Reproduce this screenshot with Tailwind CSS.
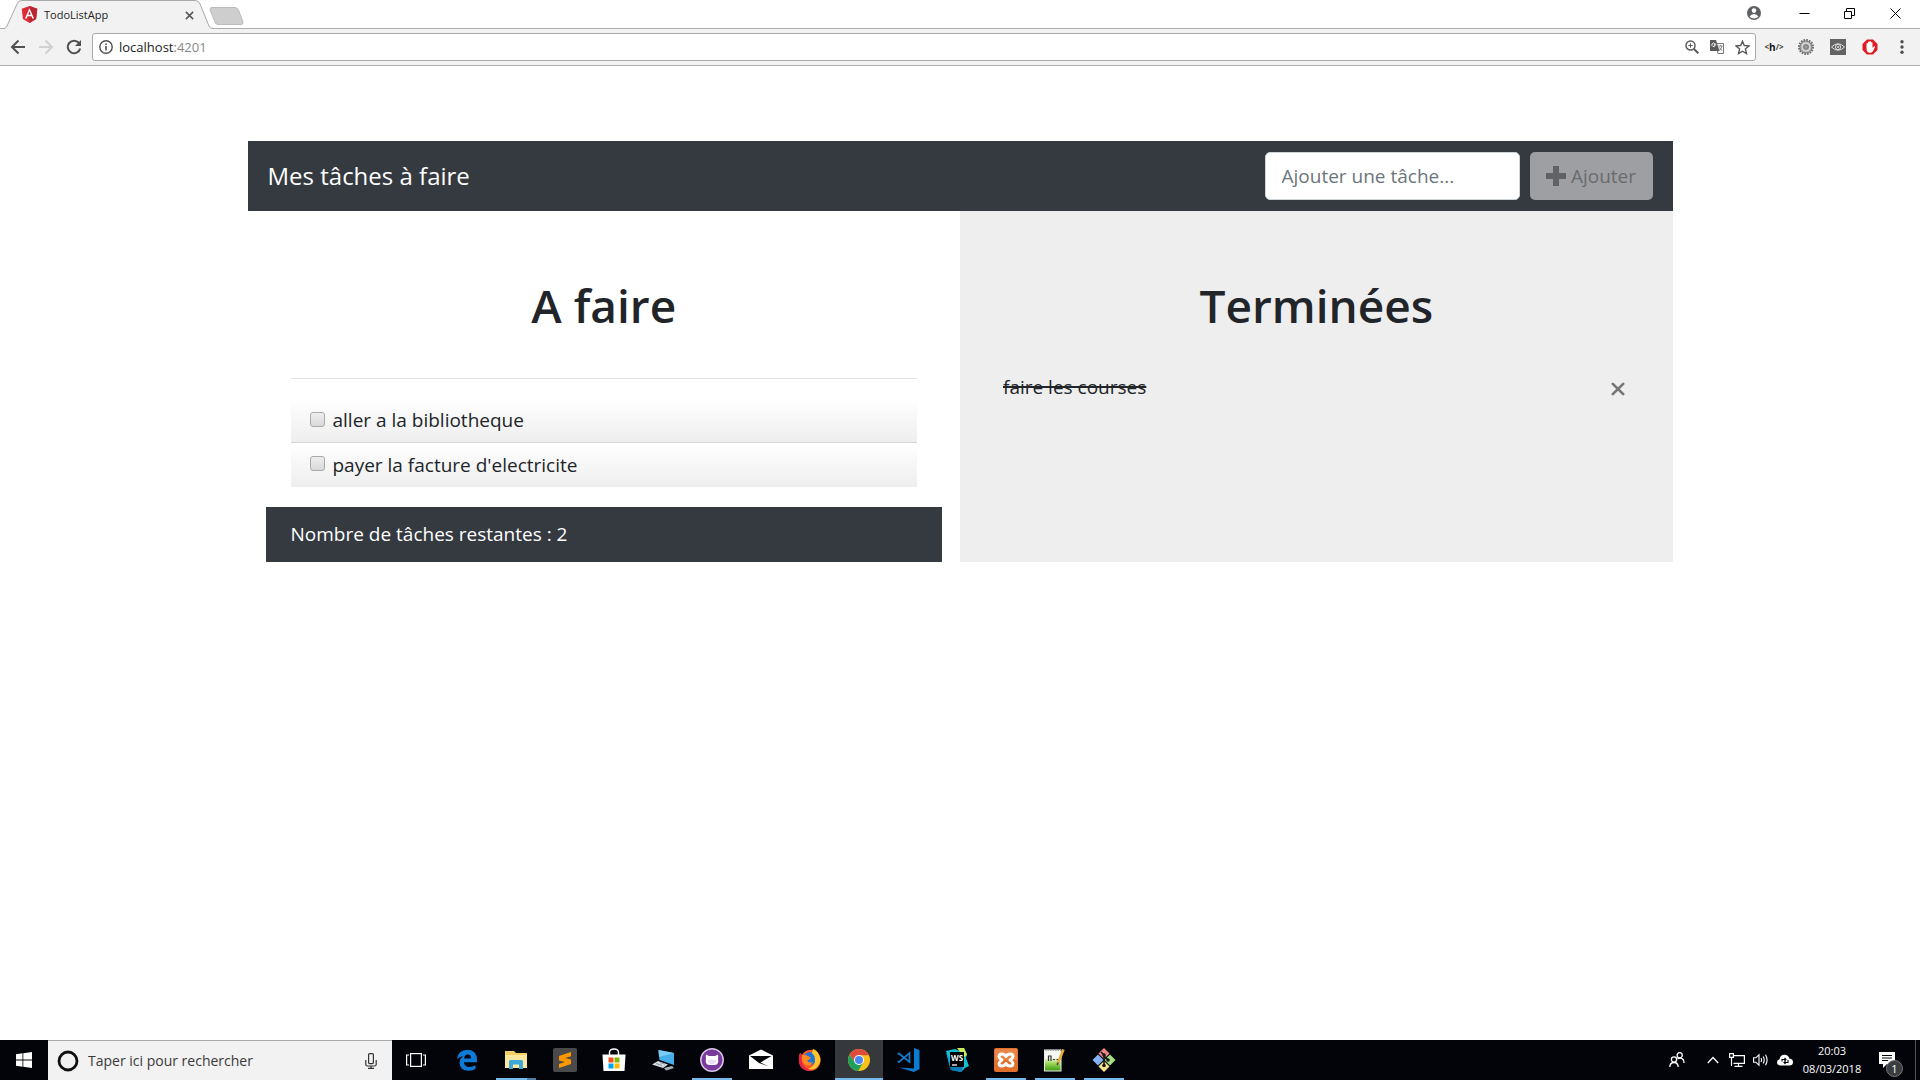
<!DOCTYPE html>
<html lang="fr">
<head>
<meta charset="utf-8">
<title>TodoListApp</title>
<script src="https://cdn.jsdelivr.net/npm/@tailwindcss/browser@4"></script>
</head>
<body class="flex min-h-screen flex-col bg-white font-['Open_Sans','Noto_Sans',sans-serif] text-[#212529]">

<!-- Browser chrome -->
<header>
  <div class="flex h-7 items-stretch bg-white pl-1">
    <div class="relative flex w-[209px] items-center">
      <svg class="absolute inset-0 z-10 h-[29px] w-[209px]" viewBox="0 0 209 29" fill="none"><path d="M0 29Q2 28 3 26L13 4Q14 .5 18 .5H191Q195 .5 196 4L205 26Q206 28.500 209 28.500V29Z" fill="#f2f2f2"/><path d="M0 28.500Q2 28 3 26L13 4Q14 .5 18 .5H191Q195 .5 196 4L205 26Q206 28.500 209 28.500" stroke="#a9a9a9"/></svg>
      <div class="relative z-20 flex w-full items-center pl-[17px]">
        <svg class="size-[17px]" viewBox="0 0 16 16"><path d="M8 0 15.300 2.600 14.200 12.300 8 16 1.800 12.300.7 2.600Z" fill="#dd2c35"/><path d="M8 0 15.300 2.600 14.200 12.300 8 16Z" fill="#b92530"/><path d="M8 2 3.700 11.800H5.300L6.200 9.600H9.800L10.700 11.800H12.300ZM8 5 9.200 8.300H6.800Z" fill="#fff" fill-rule="evenodd"/></svg>
        <span class="ml-1.5 mt-0.5 text-[11px] leading-4 text-[#222]">TodoListApp</span>
        <button class="ml-auto mr-[18px] mt-0.5 flex size-3 items-center justify-center" aria-label="Fermer l'onglet"><svg class="size-[9px]" viewBox="0 0 10 10" stroke="#555" stroke-width="1.700"><path d="M1 1 9 9M9 1 1 9"/></svg></button>
      </div>
    </div>
    <button class="-ml-1 flex items-center pt-1" aria-label="Nouvel onglet"><svg class="h-[18px] w-[35px]" viewBox="0 0 35 18"><path d="M3 .5H26Q28.500.5 29.500 3L34 15Q34.500 17.500 32 17.500H9Q7 17.500 6 15L1 3Q.5.5 3 .5Z" fill="#cecece" stroke="#bcbcbc"/></svg></button>
    <div class="ml-auto flex h-[26px] items-center text-black">
      <svg class="mr-5 size-[14px]" viewBox="0 0 14 14"><circle cx="7" cy="7" r="7" fill="#5f6063"/><circle cx="7" cy="4.600" r="2.300" fill="#fff"/><path d="M2.500 10.500Q4 8 7 8T11.500 10.500Q9.800 12.500 7 12.500T2.500 10.500Z" fill="#fff"/></svg>
      <button class="flex w-[46px] justify-center" aria-label="Réduire"><svg class="size-[11px]" viewBox="0 0 11 11" stroke="currentColor"><path d="M.5 5.500H10.500"/></svg></button>
      <button class="flex w-[45px] justify-center" aria-label="Restaurer"><svg class="size-[11px]" viewBox="0 0 11 11" stroke="currentColor" fill="none"><path d="M.5 3.500H7.500V10.500H.5ZM2.500 3.500V.5H10.500V7.500H7.500"/></svg></button>
      <button class="mr-0.5 flex w-[46px] justify-center" aria-label="Fermer"><svg class="size-[11px]" viewBox="0 0 11 11" stroke="currentColor"><path d="M.5.5 10.500 10.500M10.500.5.5 10.500"/></svg></button>
    </div>
  </div>
  <div class="flex h-[38px] items-center border-y border-[#adadad] bg-[#f2f2f2] pl-[10px] pr-2.5">
    <button aria-label="Précédent"><svg class="size-4" viewBox="0 0 16 16" fill="none" stroke="#505050" stroke-width="2"><path d="M15 8H2M8.500 1.500 2 8l6.500 6.500"/></svg></button>
    <button class="ml-3" aria-label="Suivant"><svg class="size-4" viewBox="0 0 16 16" fill="none" stroke="#d0d0d0" stroke-width="2"><path d="M1 8H14M7.500 1.500 14 8l-6.500 6.500"/></svg></button>
    <button class="ml-3" aria-label="Actualiser"><svg class="size-4" viewBox="0 0 16 16" fill="none"><path d="M13 4A6.300 6.300 0 1 0 14.200 9.500" stroke="#505050" stroke-width="2"/><path d="M15 1V7H9Z" fill="#505050"/></svg></button>
    <div class="ml-2.5 flex h-7 flex-1 items-center rounded-[3px] border border-[#a9a9a9] bg-white pl-1.5 pr-[5px]">
      <svg class="size-[14px]" viewBox="0 0 14 14" fill="none"><circle cx="7" cy="7" r="6.200" stroke="#505050" stroke-width="1.400"/><path d="M7 6V10.500M7 3.500V5" stroke="#505050" stroke-width="1.600"/></svg>
      <div class="ml-[6px] flex-1 text-[13px] leading-5 text-[#222]">localhost<span class="text-[#888]">:4201</span></div>
      <div class="flex items-center gap-[11px]">
        <svg class="size-[14px]" viewBox="0 0 14 14" fill="none" stroke="#5a5a5a"><circle cx="5.500" cy="5.500" r="4.500" stroke-width="1.500"/><path d="M9 9l4.300 4.300" stroke-width="2"/><path d="M3.300 5.500H7.700M5.500 3.300V7.700"/></svg>
        <svg class="size-[14px]" viewBox="0 0 14 14"><path d="M5.500 3.500H13.500V13.500H8Z" fill="#fff" stroke="#777"/><path d="M0 0H6L9.500 11H0Z" fill="#5a5a5a"/><path d="M6.300 4.200H4.300V5.300H5.200A1.700 1.700 0 1 1 4.800 3.700" fill="none" stroke="#fff" stroke-width=".9"/><path d="M8.500 6H12.500M10.500 5V6M12 6Q11.500 9 9 10.500M9.500 7.500Q10.500 9.500 12.300 10.500" fill="none" stroke="#777" stroke-width=".9"/></svg>
        <svg class="size-[15px]" viewBox="0 0 15 15" fill="none" stroke="#5a5a5a" stroke-width="1.400"><path d="M7.500 1.200 9.300 5.500 14 5.900 10.400 9 11.500 13.600 7.500 11.200 3.500 13.600 4.600 9 1 5.900 5.700 5.500Z"/></svg>
      </div>
    </div>
    <div class="ml-2.5 flex items-center gap-4">
      <span class="flex w-4 items-center justify-center text-[10px] font-bold leading-4 text-[#111]"><span class="text-[8px] text-[#444]">&lt;</span>h<span class="text-[8px] text-[#444]">/&gt;</span></span>
      <svg class="size-4" viewBox="0 0 16 16"><circle cx="8" cy="8" r="7" fill="none" stroke="#666" stroke-width="2" stroke-dasharray="1.600 1.150"/><circle cx="8" cy="8" r="6" fill="#b5b5b5" stroke="#777"/><circle cx="8" cy="8" r="4" fill="none" stroke="#ddd"/><circle cx="8" cy="8" r="2.300" fill="#999" stroke="#777"/></svg>
      <svg class="size-4" viewBox="0 0 16 16" fill="none"><path d="M0 0H16V16H0Z" fill="#636363"/><path d="M1.500 8Q8 1.500 14.500 8Q8 14.500 1.500 8Z" stroke="#ddd"/><circle cx="8" cy="8" r="2.600" stroke="#ddd"/><circle cx="8" cy="8" r="1" fill="#ddd"/></svg>
      <svg class="size-4" viewBox="0 0 16 16"><path d="M5 .5H11L15.500 5V11L11 15.500H5L.5 11V5Z" fill="#e01b22"/><path d="M4.500 9V4.500Q5.200 3.500 6 4.500V3Q6.700 2 7.500 3V2.500Q8.300 1.700 9 2.500V3.500Q10 2.700 10.500 3.700V9L12 7.200Q13 7 13 8L10.800 12.500Q9.500 14 7.500 13.700Q4.500 13.500 4.500 9Z" fill="#fff"/></svg>
      <button aria-label="Menu"><svg class="size-4" viewBox="0 0 16 16" fill="#505050"><circle cx="8" cy="2.700" r="1.700"/><circle cx="8" cy="8" r="1.700"/><circle cx="8" cy="13.300" r="1.700"/></svg></button>
    </div>
  </div>
</header>

<!-- Application -->
<main class="flex-1">
  <div class="mx-auto mt-[75px] max-w-[1425px]">
    <nav class="flex h-[70px] items-center bg-[#343a40] px-5">
      <a href="#" class="text-[24px] leading-9 text-white">Mes tâches à faire</a>
      <form class="ml-auto flex gap-2.5">
        <input type="text" aria-label="Ajouter une tâche" placeholder="Ajouter une tâche..." class="h-12 w-[255px] rounded-[5px] border border-[#ced4da] bg-white px-4 text-[19px] placeholder:text-[#6c757d]">
        <button type="button" disabled class="flex h-12 w-[123px] items-center justify-center gap-[5px] rounded-[5px] bg-[#9e9fa2] text-[19px] text-[#696b6e]">
          <svg class="size-5" viewBox="0 0 20 20" fill="#606265"><path d="M7 0H13V7H20V13H13V20H7V13H0V7H7Z"/></svg>Ajouter
        </button>
      </form>
    </nav>
    <div class="grid grid-cols-2">
      <section class="px-[18px]">
        <div class="px-[25px] pt-16">
          <h1 class="text-center text-[46px] font-semibold leading-[60px]">A faire</h1>
          <hr class="mt-[43px] border-[#e3e3e3]">
          <ul class="mt-5 text-[19px]">
            <li class="flex h-11 items-center border-b border-[#d5d5d5] bg-linear-to-b from-white to-[#eee] pl-[19px]">
              <input id="t1" type="checkbox" class="mb-0.5 size-[15px] appearance-none rounded-[3px] border border-[#a9a9a9] bg-linear-to-b from-[#eee] to-[#d9d9d9]">
              <label for="t1" class="ml-2">aller a la bibliotheque</label>
            </li>
            <li class="flex h-11 items-center bg-linear-to-b from-white to-[#eee] pl-[19px]">
              <input id="t2" type="checkbox" class="mb-1 size-[15px] appearance-none rounded-[3px] border border-[#a9a9a9] bg-linear-to-b from-[#eee] to-[#d9d9d9]">
              <label for="t2" class="ml-2">payer la facture d'electricite</label>
            </li>
          </ul>
        </div>
        <footer class="mt-5 flex h-[55px] items-center bg-[#343a40] px-[25px] text-[19px] text-white">Nombre de tâches restantes : 2</footer>
      </section>
      <section class="bg-[#eee] px-[43px] pt-16">
        <h1 class="text-center text-[46px] font-semibold leading-[60px]">Terminées</h1>
        <ul class="mt-9 text-[19px]">
          <li class="flex h-8 items-center justify-between pr-[5px]">
            <span class="line-through decoration-2">faire les courses</span>
            <button class="mt-1 p-0" aria-label="Supprimer"><svg class="size-[14px]" viewBox="0 0 14 14" stroke="#757575" stroke-width="2.600" stroke-linecap="round"><path d="M1.800 1.800 12.200 12.200M12.200 1.800 1.800 12.200"/></svg></button>
          </li>
        </ul>
      </section>
    </div>
  </div>
</main>

<!-- Windows taskbar -->
<footer class="flex h-10 items-stretch bg-[#020409] text-white">
  <button class="flex w-12 items-center justify-center" aria-label="Démarrer"><svg class="size-4" viewBox="0 0 16 16" fill="#fff"><path d="M0 2.200 6.500 1.300V7.600H0ZM7.300 1.200 16 0V7.600H7.300ZM0 8.400H6.500V14.700L0 13.800ZM7.300 8.400H16V16L7.300 14.800Z"/></svg></button>
  <div class="flex w-[344px] items-center border-t border-[#aaa] bg-[#f2f2f2] pl-[9px] pr-[15px]">
    <svg class="size-[22px]" viewBox="0 0 22 22"><circle cx="11" cy="11" r="9" fill="none" stroke="#111" stroke-width="2.800"/></svg>
    <input type="text" aria-label="Rechercher" placeholder="Taper ici pour rechercher" class="ml-[9px] min-w-0 flex-1 text-[14px] placeholder:text-[#3a3a3a]">
    <svg class="h-4 w-3" viewBox="0 0 12 16" fill="none" stroke="#333" stroke-width="1.200"><rect x="3.600" y=".6" width="4.800" height="10" rx="1"/><path d="M.8 7V11.500Q.8 13 2.500 13H9.500Q11.200 13 11.200 11.500V7M6 13V15.400M3 15.400H9"/></svg>
  </div>
  <button class="flex w-12 items-center justify-center" aria-label="Affichage des tâches"><svg class="h-4 w-5" viewBox="0 0 20 16" fill="none" stroke="#fff" stroke-width="1.200"><rect x="4.600" y="1.600" width="10.800" height="12.800"/><path d="M3 3H.6V13H3M17 3H19.400V13H17"/></svg></button>

  <div class="ml-[3px] flex gap-px">
    <button class="flex w-12 items-center justify-center" aria-label="Edge"><svg class="size-[22px]" viewBox="0 0 22 22"><path d="M1 10Q2 1 11.500.8Q21 1 21 11V13.200H8Q8.300 18 13.500 18Q17 18 19.500 16.300V20Q17 21.800 12.500 21.800Q4 21.500 3.500 14Q3.700 9.500 7.500 7.200Q3.500 7.500 1 10ZM8.200 9.500H15Q15 5.500 11.700 5.500Q8.500 5.500 8.200 9.500Z" fill="#0f7ad6" fill-rule="evenodd"/></svg></button>
    <button class="relative flex w-12 items-center justify-center" aria-label="Explorateur"><svg class="size-[22px]" viewBox="0 0 22 22"><path d="M0 2H9L11 4H22V19H0Z" fill="#f5cf63"/><path d="M0 6H22V19H0Z" fill="#fce79e"/><path d="M4 20V12.500Q4 11 5.500 11H16.500Q18 11 18 12.500V20H14V15.500H8V20Z" fill="#3da9da"/></svg><span class="absolute bottom-0 left-1 h-0.5 w-[31px] bg-[#76b9ed]"></span><span class="absolute bottom-0 right-1 h-0.5 w-[9px] bg-[#4f7da3]"></span></button>
    <button class="flex w-12 items-center justify-center" aria-label="Sublime Text"><svg class="size-6" viewBox="0 0 24 24"><rect width="24" height="24" rx="2" fill="#4a4a4a"/><path d="M18 4 6 8V12.500L12 14 6 16V20L18 16V11.500L12 10 18 8.200Z" fill="#ff9800"/></svg></button>
    <button class="flex w-12 items-center justify-center" aria-label="Microsoft Store"><svg class="size-6" viewBox="0 0 24 24"><path d="M7.500 7V4Q8 1 12 1T16.500 4V7" fill="none" stroke="#fff" stroke-width="1.400"/><path d="M.5 6.500H23.500L22.500 23H1.500Z" fill="#fff"/><path d="M6.500 9.500H11.500V14.500H6.500Z" fill="#f25022"/><path d="M12.500 9.500H17.500V14.500H12.500Z" fill="#7fba00"/><path d="M6.500 15.500H11.500V20.500H6.500Z" fill="#00a4ef"/><path d="M12.500 15.500H17.500V20.500H12.500Z" fill="#ffb900"/></svg></button>
    <button class="flex w-12 items-center justify-center" aria-label="Bureau à distance"><svg class="size-6" viewBox="0 0 24 24"><path d="M7.500 2 23 5V17L8.500 12Z" fill="#45aee8"/><path d="M7.500 2 23 5 8 9Z" fill="#79cdf5"/><path d="M7 13 17 16.500 12 20 1 16.500Z" fill="#d7dde2"/><path d="M5 15.500 11 17.500M9 14.500 14 16.200" stroke="#8d979e"/><path d="M13 20 21 18 23 20 15 22.500Z" fill="#aab3ba"/></svg></button>
    <button class="relative flex w-12 items-center justify-center" aria-label="GitHub Desktop"><svg class="size-6" viewBox="0 0 24 24"><circle cx="12" cy="12" r="11.200" fill="#7a3a9c" stroke="#d9c2e5" stroke-width="1.500"/><path d="M6 6.500 9 8H15L18 6.500Q18.500 8.500 18 10.500Q19.500 17 14.500 17H9.500Q4.500 17 6 10.500Q5.500 8.500 6 6.500Z" fill="#fff"/><path d="M8 12Q12 11 16 12Q17 15.500 12 16T8 12Z" fill="#ecdff3"/></svg><span class="absolute inset-x-1 bottom-0 h-0.5 bg-[#76b9ed]"></span></button>
    <button class="flex w-12 items-center justify-center" aria-label="Courrier"><svg class="size-6" viewBox="0 0 24 24"><path d="M0 7.500 12 1.500 24 7.500V21H0Z" fill="#fff"/><path d="M1 8H22.500L11.500 14.500 20 18.500 10 15Z" fill="#020409"/></svg></button>
    <button class="flex w-12 items-center justify-center" aria-label="Firefox"><svg class="size-6" viewBox="0 0 24 24"><path d="M2 5 4 7Q7 2 12 2 18 .5 20.500 5.500 24 10 22 16 19 23 12 23 4 23 1.500 16 0 10 2 5Z" fill="#ff5a26"/><path d="M2 5 4 8Q2.500 15 7 19Q10 22 15 21L12 23Q4 23 1.500 16 0 10 2 5Z" fill="#e8234b"/><circle cx="12" cy="10.500" r="6.500" fill="#2273d3"/><path d="M15 1Q19 2 21 7 24 13 20 18 16 23 10 21 18 18 17 11 16.500 7 14 5Z" fill="#ffc42b"/><path d="M4 7Q8 6.500 10 8L13 10Q11 12 9 12.500 11 15.500 15 14 12 19 7.500 17 3 14 4 7Z" fill="#ff8a1d"/></svg></button>
    <button class="relative flex w-12 items-center justify-center bg-[#36393c]" aria-label="Chrome"><svg class="size-[22px]" viewBox="0 0 22 22"><circle cx="11" cy="11" r="11" fill="#fbc116"/><path d="M1.500 5.500A11 11 0 0 1 20.500 5.600L20.900 6.300H11L6.800 13.400Z" fill="#dd4b3e"/><path d="M1.500 5.500A11 11 0 0 0 10.200 22L15.200 13.400 11 16 6.800 13.400Z" fill="#1fa15d"/><circle cx="11" cy="11" r="5" fill="#fff"/><circle cx="11" cy="11" r="4" fill="#4b88f1"/></svg><span class="absolute inset-x-0 bottom-0 h-0.5 bg-[#76b9ed]"></span></button>
    <button class="flex w-12 items-center justify-center" aria-label="Visual Studio Code"><svg class="size-6" viewBox="0 0 24 24"><path d="M18 0 23.500 2V21L18 24 3 19.500 18 20.500Z" fill="#0b7bd0"/><path d="M1.500 6 3 5.500 13.500 14V5L3 14 1.500 13.500" fill="none" stroke="#1a78c8" stroke-width="1.700"/></svg></button>
    <button class="flex w-12 items-center justify-center" aria-label="WebStorm"><svg class="size-6" viewBox="0 0 24 24"><path d="M1 3 10 1 15 3 19 0 22 6 21 10 24 18 20 20 16 24 6 22Z" fill="#12bfd3"/><path d="M12 0 19 0 22 7 19 9Z" fill="#cfe95a"/><path d="M1 4 6 14 5 20Z" fill="#0b9fd0"/><path d="M5 19H18L16 24 6 22Z" fill="#0c79b8"/><path d="M5 4H19V19H5Z" fill="#000"/><path d="M7 17H12" stroke="#fff" stroke-width="1.300"/><text x="12" y="12.500" fill="#fff" font-family="Open Sans, sans-serif" font-size="8" font-weight="700" text-anchor="middle">WS</text></svg></button>
    <button class="relative flex w-12 items-center justify-center" aria-label="XAMPP"><svg class="size-6" viewBox="0 0 24 24" fill="none"><rect width="24" height="24" rx="2" fill="#e0702c"/><path d="M1 1H23V12H1Z" fill="#e98546"/><path d="M12 8.500Q10.500 6 8 6 5 6 5 8.500 5 10 8 12 5 14 5 15.500 5 18 8 18 10.500 18 12 15.500 13.500 18 16 18 19 18 19 15.500 19 14 16 12 19 10 19 8.500 19 6 16 6 13.500 6 12 8.500Z" stroke="#fff" stroke-width="3" stroke-linejoin="round"/></svg><span class="absolute inset-x-1 bottom-0 h-0.5 bg-[#76b9ed]"></span></button>
    <button class="relative flex w-12 items-center justify-center" aria-label="Notepad++"><svg class="size-6" viewBox="0 0 24 24" fill="none"><defs><linearGradient id="np" x2="0" y2="1"><stop offset=".35" stop-color="#f6f8f2"/><stop offset=".6" stop-color="#a7dc64"/><stop offset="1" stop-color="#3f9d12"/></linearGradient></defs><path d="M1 1.500H18.500V23.500H1Z" fill="#ececec"/><path d="M2 3H17.500V22.500H2Z" fill="url(#np)"/><path d="M2 2H18" stroke="#8f8f8f" stroke-width="1.500" stroke-dasharray="1.500 1"/><path d="M5.500 13V8H8V13M10 11.500H12M13.500 11.500H15.500" stroke="#333" stroke-width="1.200"/><path d="M20.500 1.500 15 15" stroke="#e6ad38" stroke-width="2.600"/><path d="M15 14.500 14.200 17" stroke="#444" stroke-width="1.500"/></svg><span class="absolute inset-x-1 bottom-0 h-0.5 bg-[#76b9ed]"></span></button>
    <button class="relative flex w-12 items-center justify-center" aria-label="Git"><svg class="size-6" viewBox="0 0 24 24" fill="none"><path d="M12 0 17.500 5.500 12 11 6.500 5.500Z" fill="#ef8585"/><path d="M6 6.500 11.500 12 6 17.500.5 12Z" fill="#86b2f4"/><path d="M18 6.500 23.500 12 18 17.500 12.500 12Z" fill="#a5e184"/><path d="M12 13 17.500 18.500 12 24 6.500 18.500Z" fill="#fbe38d"/><path d="M9 4 12 7V18M12 8 16 12" stroke="#181818" stroke-width="1.600"/><circle cx="12" cy="7" r="1.800" fill="#181818"/><circle cx="16" cy="12" r="1.800" fill="#181818"/><circle cx="12" cy="17.500" r="1.800" fill="#181818"/></svg><span class="absolute inset-x-1 bottom-0 h-0.5 bg-[#76b9ed]"></span></button>
  </div>

  <div class="ml-auto flex items-center">
    <svg class="mr-[22px] size-4" viewBox="0 0 16 16" fill="none" stroke="#fff" stroke-width="1.300"><circle cx="5" cy="7.500" r="2.600"/><path d="M.8 15Q1 10.500 5 10.500T9.200 15"/><circle cx="10.700" cy="3.200" r="2.600"/><path d="M8.500 7Q10 6 11.500 6.200 15 6.600 15 11"/></svg>
    <svg class="mr-2.5 h-2 w-3" viewBox="0 0 12 8" fill="none" stroke="#fff" stroke-width="1.300"><path d="M.8 7 6 1.500 11.200 7"/></svg>
    <svg class="mr-2 size-4" viewBox="0 0 16 16" fill="none" stroke="#fff" stroke-width="1.200"><path d="M5 3.600H15.400V11.400H4.500M9.500 11.400V14.400M5.500 14.400H13.500M.6 1.600H4.400V5.400H.6ZM2.500 5.400V14"/></svg>
    <svg class="mr-2 size-4" viewBox="0 0 16 16" fill="none" stroke="#fff" stroke-width="1.100"><path d="M.6 5.800H2.800L6 2.800V13.200L2.800 10.200H.6ZM8 6Q9.200 8 8 10M10.200 4.500Q12.300 8 10.200 11.500M12.500 2.800Q15.700 8 12.500 13.200"/></svg>
    <svg class="h-4 w-4" viewBox="0 0 16 16"><path d="M3.500 13.500Q0 13.200 0 10.200 0 7.600 2.600 7.200 3 3 7.500 2.800 11.500 2.800 12.300 6.600 16 7 16 10.200 15.800 13.500 12.500 13.500Z" fill="#fff"/><path d="M5 9.500V7.500H9M11 8V10.500H7M7.500 6 9 7.500 7.500 9M8.500 9 7 10.500 8.500 12" fill="none" stroke="#020409" stroke-width="1.100"/></svg>
    <time class="w-[78px] text-center text-[11px] leading-[18px]">20:03<br>08/03/2018</time>
    <button class="relative ml-2 mr-5" aria-label="Notifications"><svg class="h-[18px] w-4" viewBox="0 0 16 18"><path d="M0 1H16V13H8L4 17V13H0Z" fill="#fff"/><path d="M3 4.500H13M3 7H13M3 9.500H9" stroke="#020409"/></svg><span class="absolute -bottom-2 left-[7px] flex size-[17px] items-center justify-center rounded-full border border-[#777] bg-[#3a3d40] text-[11px] leading-none">1</span></button>
    <span class="mr-1 h-10 w-px bg-[#555]"></span>
  </div>
</footer>
</body>
</html>
